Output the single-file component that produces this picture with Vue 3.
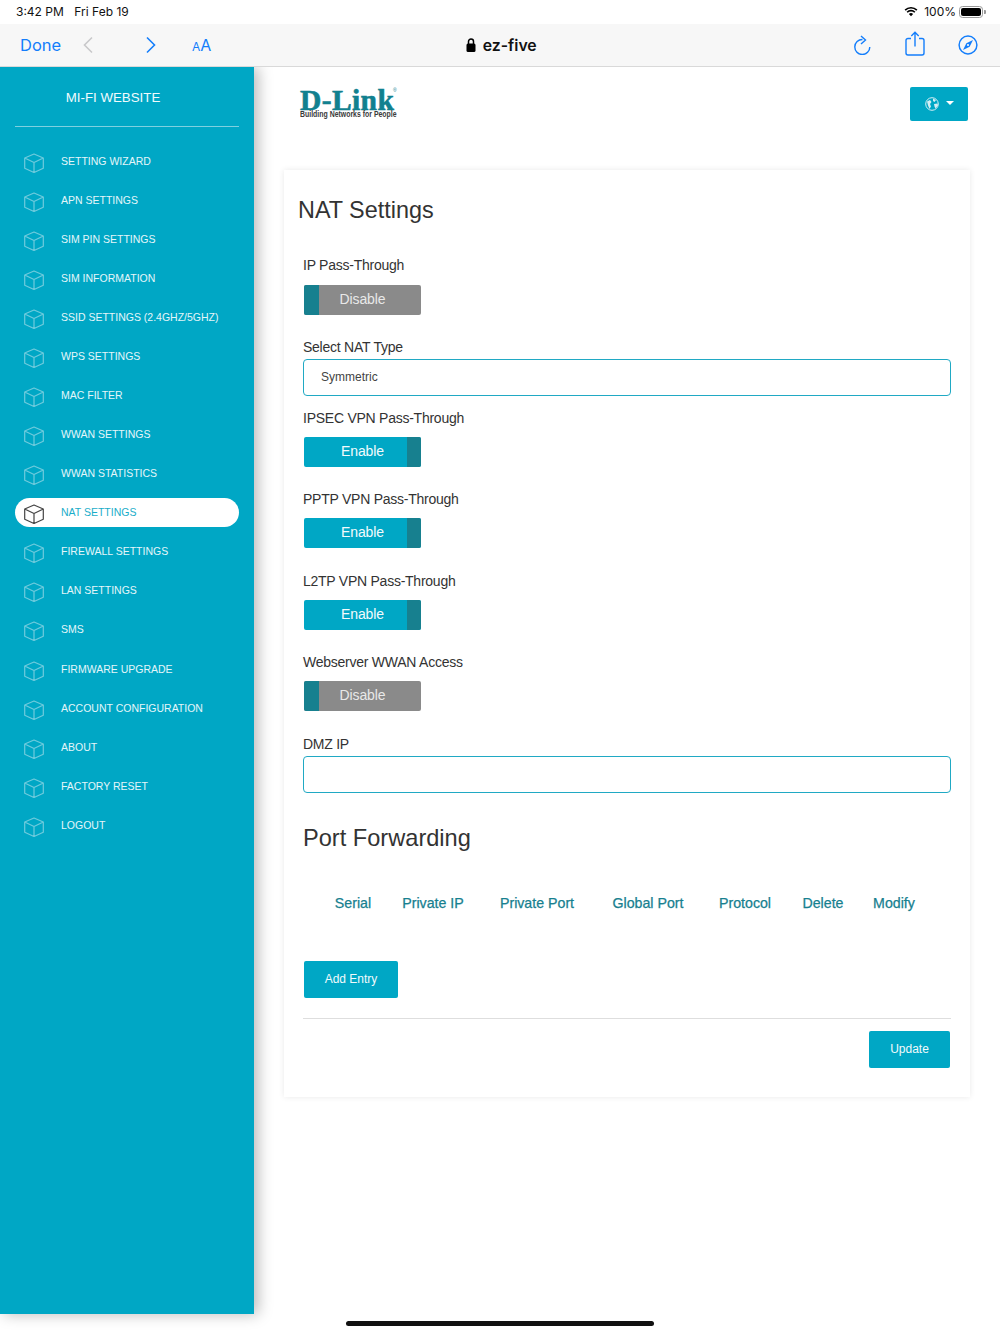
<script setup>
const items = ['SETTING WIZARD','APN SETTINGS','SIM PIN SETTINGS','SIM INFORMATION','SSID SETTINGS (2.4GHZ/5GHZ)','WPS SETTINGS','MAC FILTER','WWAN SETTINGS','WWAN STATISTICS','NAT SETTINGS','FIREWALL SETTINGS','LAN SETTINGS','SMS','FIRMWARE UPGRADE','ACCOUNT CONFIGURATION','ABOUT','FACTORY RESET','LOGOUT']
const cols = ['Serial','Private IP','Private Port','Global Port','Protocol','Delete','Modify']
const switches = [['IPSEC VPN Pass-Through','Enable',true],['PPTP VPN Pass-Through','Enable',true],['L2TP VPN Pass-Through','Enable',true],['Webserver WWAN Access','Disable',false]]
</script>

<template>
  <div class="page">
    <div class="status">
      <div class="status-left"><span>3:42 PM</span><span>Fri Feb 19</span></div>
      <div class="status-right">
        <svg class="wifi" width="14" height="11" viewBox="0 0 16 12"><path d="M8 11.500 5.600 8.900a3.400 3.400 0 0 1 4.800 0z" fill="#000"/><path d="M3.600 6.900a6.200 6.200 0 0 1 8.800 0M1.300 4.500a9.500 9.500 0 0 1 13.400 0" fill="none" stroke="#000" stroke-width="1.900"/></svg>
        <span>100%</span>
        <div class="battery"><div class="battery-fill"></div></div>
        <div class="battery-tip"></div>
      </div>
    </div>
    <div class="toolbar">
      <div class="tb-left">
        <span class="done">Done</span>
        <svg class="chev" width="12" height="18" viewBox="0 0 12 18"><path d="M10 1.500 2.500 9l7.500 7.500" fill="none" stroke="#c8c8ca" stroke-width="1.600"/></svg>
        <svg class="chev2" width="12" height="18" viewBox="0 0 12 18"><path d="M2 1.500 9.500 9 2 16.500" fill="none" stroke="#147efb" stroke-width="1.600"/></svg>
        <span class="aa"><small>A</small>A</span>
      </div>
      <div class="url">
        <svg width="10" height="14" viewBox="0 0 10 14"><rect x="0.500" y="5.500" width="9" height="8.500" rx="1.500" fill="#000"/><path d="M2.500 6V3.500a2.500 2.500 0 0 1 5 0V6" fill="none" stroke="#000" stroke-width="1.500"/></svg>
        <span>ez-five</span>
      </div>
      <div class="tb-right">
        <svg width="18" height="20" viewBox="0 0 18 20"><path d="M8.500 4.500A7.500 7.500 0 1 0 15.800 12" fill="none" stroke="#147efb" stroke-width="1.400"/><path d="M7 1 11.500 5 7 9" fill="none" stroke="#147efb" stroke-width="1.400"/></svg>
        <svg class="share" width="20" height="25" viewBox="0 0 20 25"><path d="M6 7.500H3A2 2 0 0 0 1 9.500V22a2 2 0 0 0 2 2h14a2 2 0 0 0 2-2V9.500a2 2 0 0 0-2-2H14M10 15.500V1.500M6.300 5 10 1.300 13.700 5" fill="none" stroke="#147efb" stroke-width="1.400"/></svg>
        <svg width="20" height="20" viewBox="0 0 22 22"><circle cx="11" cy="11" r="9.800" fill="none" stroke="#147efb" stroke-width="1.600"/><path d="M16.500 5.500 12.800 12.800 5.500 16.500 9.200 9.200z" fill="#147efb"/><circle cx="11" cy="11" r="1.200" fill="#f7f7f7"/></svg>
      </div>
    </div>
    <div class="body">
      <aside class="sidebar">
        <div class="brand">MI-FI WEBSITE</div>
        <nav class="menu">
          <div v-for="item in items" :key="item" class="item" :class="{ active: item === 'NAT SETTINGS' }">
            <svg class="cube" width="20" height="20" viewBox="0 0 20 20"><path d="M10 1 19.300 5V15.300L10 19.500 0.700 15.300V5zM0.700 5 10 9.500 19.300 5M10 9.500V19.500" fill="none" stroke="currentColor" stroke-width="1.200" stroke-linejoin="round"/></svg>
            <span>{{ item }}</span>
          </div>
        </nav>
      </aside>
      <main class="main">
        <header class="top">
          <div class="logo">
            <div class="logo-word">D-Link<sup>®</sup></div>
            <div class="logo-tag">Building Networks for People</div>
          </div>
          <div class="lang">
            <svg width="14" height="14" viewBox="0 0 14 14"><circle cx="7" cy="7" r="6.300" fill="none" stroke="#d5eef4" stroke-width="1"/><path d="M2 4.500 5 3 6.500 5 5 7 6 9.500 4.500 12 3 8.500zM8 1.500l3 1.500-1.500 2L8 4zM9 7l3.500-.5.500 2-2.500 3L9.500 9.500z" fill="#d5eef4"/></svg>
            <span class="caret"></span>
          </div>
        </header>
        <section class="card">
          <h1 class="title">NAT Settings</h1>
          <div class="first field">
            <div class="label">IP Pass-Through</div>
            <div class="switch off"><span class="knob left"></span><span class="txt">Disable</span></div>
          </div>
          <div class="input-field">
            <div class="label">Select NAT Type</div>
            <div class="input">Symmetric</div>
          </div>
          <div v-for="s in switches" :key="s[0]" class="field">
            <div class="label">{{ s[0] }}</div>
            <div class="switch" :class="s[2] ? 'on' : 'off'">
              <span class="knob" :class="s[2] ? 'right' : 'left'"></span><span class="txt">{{ s[1] }}</span>
            </div>
          </div>
          <div class="input-field dmz">
            <div class="label">DMZ IP</div>
            <div class="input"></div>
          </div>
          <h2 class="sub">Port Forwarding</h2>
          <div class="thead"><span v-for="c in cols" :key="c">{{ c }}</span></div>
          <button class="btn add">Add Entry</button>
          <div class="rule"></div>
          <div class="foot"><button class="btn update">Update</button></div>
        </section>
      </main>
    </div>
    <div class="home-wrap"><div class="home"></div></div>
  </div>
</template>

<style>
html, body { margin: 0; background: #fff; }
</style>

<style scoped>
.page { width: 1000px; height: 1334px; display: flex; flex-direction: column; overflow: hidden; font-family: "Liberation Sans", Arial, sans-serif; background: #fff; }
.status { height: 24px; display: flex; justify-content: space-between; align-items: center; padding: 0 14.500px 1px 16px; font-family: Inter, "Liberation Sans", sans-serif; font-size: 12px; color: #111; box-sizing: border-box; flex: none; }
.status-left { display: flex; gap: 10.500px; }
.status-right { display: flex; align-items: center; gap: 3px; }
.wifi { margin-right: 3px; }
.battery { width: 24px; height: 12px; border: 1px solid #999; border-radius: 3.500px; padding: 1px; box-sizing: border-box; }
.battery-fill { height: 100%; background: #000; border-radius: 2px; }
.battery-tip { width: 1.500px; height: 4px; background: #999; margin-left: -2px; border-radius: 0 1px 1px 0; }
.toolbar { height: 43px; background: #f7f7f7; border-bottom: 1px solid #d9d9d9; box-sizing: border-box; display: flex; align-items: center; justify-content: space-between; padding: 0 22px 0 20px; position: relative; z-index: 2; flex: none; }
.tb-left { display: flex; align-items: center; }
.done { font-family: Inter, "Liberation Sans", sans-serif; font-size: 16.500px; color: #147efb; width: 60px; }
.chev { margin-left: 2px; }
.chev2 { margin-left: 51px; }
.aa { margin-left: 35px; color: #147efb; font-size: 16px; font-family: Inter, "Liberation Sans", sans-serif; }
.aa small { font-size: 12px; }
.url { position: absolute; left: 0; right: 0; top: 0; bottom: 0; padding-left: 2.400px; display: flex; align-items: center; justify-content: center; gap: 7px; font-family: Inter, "Liberation Sans", sans-serif; font-size: 15.800px; font-weight: 600; color: #111; pointer-events: none; }
.tb-right { display: flex; align-items: center; gap: 33px; }
.share { margin-bottom: 4px; }
.body { display: flex; height: 1247px; flex: none; }
.sidebar { width: 254px; background: #00a7c5; box-shadow: 4px 0 14px rgba(0,0,0,.28); position: relative; z-index: 1; flex: none; padding: 0 15px; box-sizing: border-box; }
.brand { height: 60px; border-bottom: 1px solid #7fd0e0; width: 224px; display: flex; align-items: center; justify-content: center; padding: 1px 28px 0 0; box-sizing: border-box; color: #f1fbfd; font-size: 13.300px; }
.menu { display: flex; flex-direction: column; gap: 10.060px; margin-top: 19.400px; width: 224px; }
.item { height: 29px; display: flex; align-items: center; border-radius: 15px; color: #e4f6fa; font-size: 10.500px; }
.item .cube { margin: 4px 17px 0 9px; color: #6fcbdd; flex: none; }
.item.active { background: #fff; color: #1aadc9; }
.item.active .cube { color: #444; }
.main { flex: 1; min-width: 0; padding: 0 30px; box-sizing: border-box; }
.top { height: 103px; display: flex; justify-content: space-between; align-items: flex-start; }
.logo { margin: 22.500px 0 0 16px; width: 100px; }
.logo-word { font-family: "Liberation Serif", serif; font-weight: 700; font-size: 29.500px; line-height: 20px; color: #11808f; letter-spacing: 0.400px; height: 20px; white-space: nowrap; -webkit-text-stroke: 0.600px #11808f; position: relative; }
.logo-word sup { font-size: 5px; font-family: "Liberation Sans", sans-serif; font-weight: 400; position: absolute; left: 93px; top: -3px; line-height: 6px; letter-spacing: 0; -webkit-text-stroke: 0; }
.logo-tag { margin-top: 0.500px; font-size: 8.500px; font-weight: 700; color: #3a3a3a; white-space: nowrap; line-height: 8px; transform: scaleX(.815); transform-origin: left center; }
.lang { margin: 20px 2px 0 0; width: 58px; height: 34px; background: #00a7c5; border-radius: 2px; display: flex; align-items: center; justify-content: center; gap: 7px; }
.caret { width: 0; height: 0; border-left: 4px solid transparent; border-right: 4px solid transparent; border-top: 4px solid #fff; margin-bottom: 2px; }
.card { background: #fff; box-shadow: 0 0 6px rgba(0,0,0,.09); width: 686px; padding: 25px 19px 29px 19px; box-sizing: border-box; }
.title { margin: 0 0 0 -5px; font-weight: 400; font-size: 23.400px; line-height: 30px; color: #333; }
.label { font-size: 14px; letter-spacing: -0.250px; line-height: 20px; color: #333; }
.first { margin-top: 30px; }
.field { height: 81.300px; }
.first.field { height: 82px; }
.field .label { margin-bottom: 9px; }
.first .label { margin-bottom: 10px; }
.switch { width: 117px; height: 30px; margin-left: 1px; display: flex; position: relative; font-size: 14px; letter-spacing: -0.100px; border-radius: 2px; overflow: hidden; }
.switch .txt { flex: 1; display: flex; align-items: center; justify-content: center; padding-bottom: 2px; }
.switch .knob { width: 14.500px; background: #17808f; position: absolute; top: 0; bottom: 0; }
.knob.left { left: 0; }
.knob.right { right: 0; }
.switch.on { background: #00a7c5; color: #f2fbfd; }
.switch.off { background: #8a8a8a; color: #e8e8e8; }
.input-field { margin-bottom: 12px; }
.input-field .label { margin-bottom: 2px; }
.dmz { margin-top: 0.800px; }
.input { height: 37px; width: 648px; box-sizing: border-box; border: 1px solid #20a9c4; border-radius: 4px; display: flex; align-items: center; padding: 0 0 1px 17px; font-size: 12px; color: #444; }
.sub { margin: 30px 0 40px; font-weight: 400; font-size: 23.600px; line-height: 30px; color: #333; }
.thead { display: grid; grid-template-columns: 80px 80px 128px 94px 100px 56px 86px; margin-left: 10px; height: 20px; line-height: 20px; font-size: 14.200px; text-align: center; color: #17808f; -webkit-text-stroke: 0.250px #17808f; }
.btn { border: 0; border-radius: 2px; background: #00a7c5; color: #f0fafc; font-family: inherit; font-size: 12px; height: 37px; padding: 0 0 1px; display: block; }
.add { width: 94px; margin: 48px 0 0 1px; }
.rule { height: 1px; background: #dedede; width: 648px; margin: 20px 0 12px; }
.foot { display: flex; justify-content: flex-end; width: 647px; }
.update { width: 81px; }
.home-wrap { flex: 1; display: flex; justify-content: center; padding-top: 7px; }
.home { width: 308px; height: 5px; background: #111; border-radius: 3px; }
</style>
